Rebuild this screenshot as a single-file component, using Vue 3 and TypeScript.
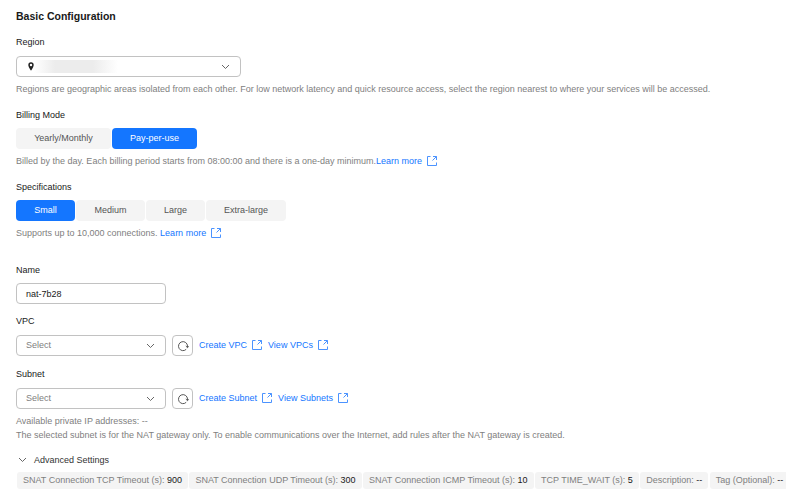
<script setup lang="ts">
const billingModes = [
  { label: 'Yearly/Monthly', width: 95, active: false },
  { label: 'Pay-per-use', width: 85, active: true },
]

const specs = [
  { label: 'Small', width: 59, active: true },
  { label: 'Medium', width: 69, active: false },
  { label: 'Large', width: 59, active: false },
  { label: 'Extra-large', width: 80, active: false },
]

const advancedTags = [
  { label: 'SNAT Connection TCP Timeout (s):', value: '900' },
  { label: 'SNAT Connection UDP Timeout (s):', value: '300' },
  { label: 'SNAT Connection ICMP Timeout (s):', value: '10' },
  { label: 'TCP TIME_WAIT (s):', value: '5' },
  { label: 'Description:', value: '--' },
  { label: 'Tag (Optional):', value: '--' },
]
</script>

<template>
  <div class="config-page">
    <h2 class="page-title">Basic Configuration</h2>

    <div class="field field-region">
      <div class="label">Region</div>
      <div class="select select-wide">
        <svg class="pin" width="6" height="9" viewBox="0 0 6 9">
          <path d="M3 .3A2.7 2.7 0 0 0 .3 3C.3 5 3 8.7 3 8.7S5.700 5 5.700 3A2.700 2.700 0 0 0 3 .3Z" fill="#222" />
          <circle cx="3" cy="3" r="1.200" fill="#fff" />
        </svg>
        <span class="blurred"></span>
        <svg class="chevron" width="9" height="6" viewBox="0 0 9 6">
          <path d="M1 1l3.500 3.500L8 1" fill="none" stroke="#666" stroke-width="1" />
        </svg>
      </div>
      <p class="hint">Regions are geographic areas isolated from each other. For low network latency and quick resource access, select the region nearest to where your services will be accessed.</p>
    </div>

    <div class="field field-billing">
      <div class="label">Billing Mode</div>
      <div class="segments">
        <button
          v-for="item in billingModes"
          :key="item.label"
          class="segment"
          :class="{ active: item.active }"
          :style="{ width: item.width + 'px' }"
        >{{ item.label }}</button>
      </div>
      <p class="hint">Billed by the day. Each billing period starts from 08:00:00 and there is a one-day minimum.<a class="link">Learn more<svg class="ext" width="10" height="10" viewBox="0 0 10 10"><path d="M3.500.5h-3v9h9v-3M6 .5h3.500V4M9.500.5l-4 4" fill="none" stroke="#4b93ff" stroke-width="1" /></svg></a></p>
    </div>

    <div class="field field-spec">
      <div class="label">Specifications</div>
      <div class="segments">
        <button
          v-for="item in specs"
          :key="item.label"
          class="segment"
          :class="{ active: item.active }"
          :style="{ width: item.width + 'px' }"
        >{{ item.label }}</button>
      </div>
      <p class="hint">Supports up to 10,000 connections. <a class="link">Learn more<svg class="ext" width="10" height="10" viewBox="0 0 10 10"><path d="M3.500.5h-3v9h9v-3M6 .5h3.500V4M9.500.5l-4 4" fill="none" stroke="#4b93ff" stroke-width="1" /></svg></a></p>
    </div>

    <div class="field field-name">
      <div class="label">Name</div>
      <div class="select select-narrow name-input">nat-7b28</div>
    </div>

    <div class="field field-vpc">
      <div class="label">VPC</div>
      <div class="select-row">
        <div class="select select-narrow placeholder">
          Select
          <svg class="chevron" width="9" height="6" viewBox="0 0 9 6">
            <path d="M1 1l3.500 3.500L8 1" fill="none" stroke="#666" stroke-width="1" />
          </svg>
        </div>
        <div class="refresh">
          <svg width="12" height="12" viewBox="0 0 12 12">
            <path d="M9.200 9.300A4.500 4.500 0 1 1 10.500 6v1.300M8.800 6l1.700 1.700L12 6.200" fill="none" stroke="#444" stroke-width="0.900" />
          </svg>
        </div>
        <a class="link row-link">Create VPC<svg class="ext" width="10" height="10" viewBox="0 0 10 10"><path d="M3.500.5h-3v9h9v-3M6 .5h3.500V4M9.500.5l-4 4" fill="none" stroke="#4b93ff" stroke-width="1" /></svg></a>
        <a class="link row-link">View VPCs<svg class="ext" width="10" height="10" viewBox="0 0 10 10"><path d="M3.500.5h-3v9h9v-3M6 .5h3.500V4M9.500.5l-4 4" fill="none" stroke="#4b93ff" stroke-width="1" /></svg></a>
      </div>
    </div>

    <div class="field field-subnet">
      <div class="label">Subnet</div>
      <div class="select-row">
        <div class="select select-narrow placeholder">
          Select
          <svg class="chevron" width="9" height="6" viewBox="0 0 9 6">
            <path d="M1 1l3.500 3.500L8 1" fill="none" stroke="#666" stroke-width="1" />
          </svg>
        </div>
        <div class="refresh">
          <svg width="12" height="12" viewBox="0 0 12 12">
            <path d="M9.200 9.300A4.500 4.500 0 1 1 10.500 6v1.300M8.800 6l1.700 1.700L12 6.200" fill="none" stroke="#444" stroke-width="0.900" />
          </svg>
        </div>
        <a class="link row-link">Create Subnet<svg class="ext" width="10" height="10" viewBox="0 0 10 10"><path d="M3.500.5h-3v9h9v-3M6 .5h3.500V4M9.500.5l-4 4" fill="none" stroke="#4b93ff" stroke-width="1" /></svg></a>
        <a class="link row-link">View Subnets<svg class="ext" width="10" height="10" viewBox="0 0 10 10"><path d="M3.500.5h-3v9h9v-3M6 .5h3.500V4M9.500.5l-4 4" fill="none" stroke="#4b93ff" stroke-width="1" /></svg></a>
      </div>
      <p class="hint subnet-hint">Available private IP addresses: --</p>
      <p class="hint subnet-hint second">The selected subnet is for the NAT gateway only. To enable communications over the Internet, add rules after the NAT gateway is created.</p>
    </div>

    <div class="advanced">
      <svg width="9" height="6" viewBox="0 0 9 6">
        <path d="M1 1l3.500 3.500L8 1" fill="none" stroke="#666" stroke-width="1" />
      </svg>
      <span>Advanced Settings</span>
    </div>

    <div class="tags">
      <div v-for="tag in advancedTags" :key="tag.label" class="tag">
        {{ tag.label }} <span class="tag-value">{{ tag.value }}</span>
      </div>
    </div>
  </div>
</template>

<style scoped>
.config-page {
  width: 786px;
  height: 492px;
  box-sizing: border-box;
  padding: 10px 0 0 16px;
  overflow: hidden;
  background: #fff;
  font-family: "Liberation Sans", Arial, sans-serif;
  font-size: 9px;
  color: #252b3a;
}

.page-title {
  margin: 0;
  font-size: 10.500px;
  line-height: 13px;
  font-weight: 700;
  color: #191919;
}

.label {
  height: 12px;
  line-height: 12px;
  color: #191919;
}

.field-region {
  margin-top: 13px;
}

.field-billing {
  margin-top: 14px;
}

.field-spec {
  margin-top: 14px;
}

.field-name {
  margin-top: 25px;
}

.field-vpc {
  margin-top: 11px;
}

.field-subnet {
  margin-top: 12px;
}

.select {
  position: relative;
  box-sizing: border-box;
  display: flex;
  align-items: center;
  height: 21px;
  margin-top: 8px;
  border: 1px solid #c2c2c2;
  border-radius: 4px;
  background: #fff;
  color: #191919;
}

.select-wide {
  width: 225px;
  padding-left: 11px;
}

.select-narrow {
  width: 150px;
  padding-left: 9px;
}

.name-input {
  margin-top: 7px;
}

.placeholder {
  margin-top: 0;
  padding-bottom: 1px;
  color: #808080;
}

.pin {
  flex: none;
}

.blurred {
  width: 84px;
  height: 13px;
  background: linear-gradient(90deg, #fff 0%, #ececec 25%, #ececec 70%, #fff 100%);
}

.chevron {
  position: absolute;
  right: 10px;
  top: 7px;
}

.hint {
  margin: 6px 0 0;
  height: 12px;
  line-height: 12px;
  color: #808080;
  white-space: nowrap;
}

.subnet-hint {
  margin-top: 6px;
}

.subnet-hint.second {
  margin-top: 2px;
}

.segments {
  display: flex;
  gap: 1px;
  margin-top: 7px;
}

.segment {
  height: 21px;
  padding: 0 0 1px;
  border: none;
  border-radius: 4px;
  background: #f4f4f4;
  color: #555;
  font-family: inherit;
  font-size: 9px;
}

.segment.active {
  background: #1476ff;
  color: #fff;
}

.link {
  color: #1476ff;
  text-decoration: none;
}

.ext {
  margin-left: 5px;
  vertical-align: -2px;
}

.select-row {
  display: flex;
  align-items: center;
  margin-top: 8px;
}

.refresh {
  box-sizing: border-box;
  display: flex;
  align-items: center;
  justify-content: center;
  width: 21px;
  height: 21px;
  margin-left: 6px;
  border: 1px solid #c2c2c2;
  border-radius: 4px;
}

.row-link {
  margin-left: 6px;
  padding-bottom: 1px;
  white-space: nowrap;
}

.row-link + .row-link {
  margin-left: 6px;
}

.advanced {
  display: flex;
  align-items: center;
  gap: 7px;
  height: 12px;
  margin: 13px 0 0 2px;
  color: #333;
}

.tags {
  display: flex;
  gap: 1.500px;
  margin: 6px 0 0 1px;
  white-space: nowrap;
}

.tag {
  height: 17px;
  line-height: 17px;
  padding: 0 6px;
  border-radius: 3px;
  background: #f4f4f4;
  color: #808080;
}

.tag-value {
  color: #191919;
}
</style>
